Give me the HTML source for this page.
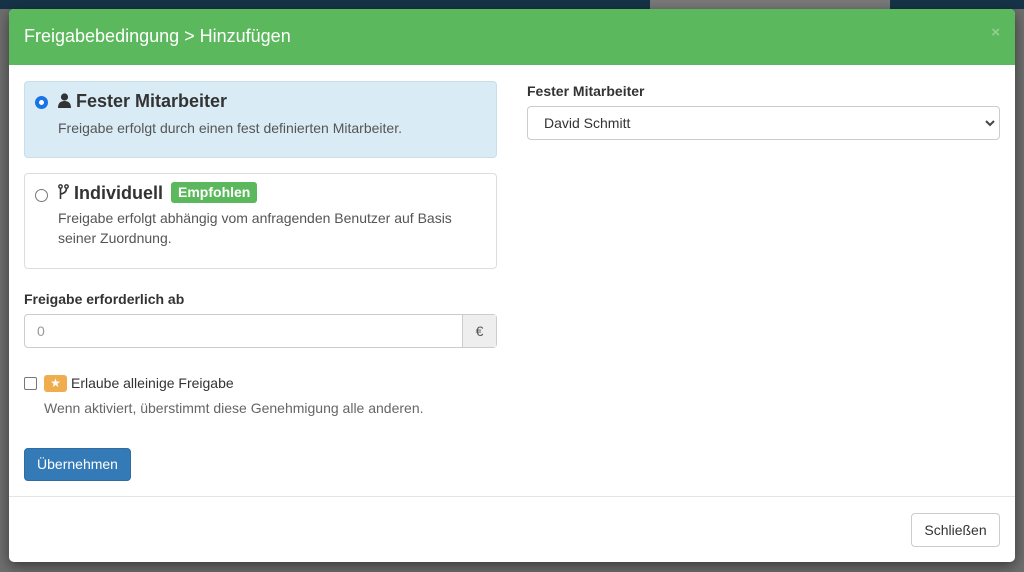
<!DOCTYPE html>
<html><head><meta charset="utf-8"><style>
*{box-sizing:border-box}
body{margin:0;width:1024px;height:572px;overflow:hidden;background:#6f6f6f;font-family:"Liberation Sans",Arial,sans-serif;color:#333;position:relative}
.topbar{position:absolute;left:0;top:0;width:1024px;height:9px;background:#163447}
.search{position:absolute;left:650px;top:0;width:240px;height:9px;background:#7a7a7a}
.modal{position:absolute;left:9px;top:9px;width:1006px;height:553px;background:#fff;border-radius:5px;overflow:hidden;box-shadow:0 4px 14px rgba(0,0,0,.5)}
.hdr{height:56px;background:#5cb85c;color:#fff;font-size:18px;padding:17px 0 0 15px}
.x{position:absolute;right:15px;top:15px;color:#8fd08f;font-weight:bold;font-size:15px}
.opt{position:absolute;left:15px;width:473px;border:1px solid #ddd;border-radius:4px}
.opt1{top:72px;height:77px;background:#d9ecf5;border-color:#c6dfea}
.opt2{top:164px;height:96px}
.radio{position:absolute;left:10px;width:13px;height:13px;border-radius:50%;border:1px solid #777;background:#fff}
.title{position:absolute;left:33px;font-size:18px;font-weight:bold;color:#333}
.desc{position:absolute;left:33px;font-size:14px;color:#555;line-height:20px;width:420px}
.badge{display:inline-block;background:#5cb85c;color:#fff;font-size:14px;padding:2px 7px 3px;border-radius:3px;vertical-align:2px;margin-left:3px}
.lbl{position:absolute;font-size:14px;font-weight:bold;color:#333}
.inp{position:absolute;left:15px;top:305px;width:473px;height:34px;border:1px solid #ccc;border-radius:4px;font-size:14px;color:#999;padding:8px 12px}
.addon{position:absolute;right:0;top:0;width:34px;height:32px;background:#eee;border-left:1px solid #ccc;color:#555;text-align:center;line-height:32px}
.sel{position:absolute;left:518px;top:97px;width:473px;height:34px;border:1px solid #ccc;border-radius:4px;font-size:14px;color:#333;padding:8px 16px}
.btn{position:absolute;font-size:14px;border-radius:4px;text-align:center}
</style></head><body>
<div class="topbar"></div><div class="search"></div>
<div class="modal">
<div class="hdr">Freigabebedingung &gt; Hinzufügen</div><div class="x">×</div>
<div class="opt opt1">
 <div class="radio" style="top:14px;border:4px solid #1a73e8"></div>
 <div class="title" style="top:9px"><svg width="13" height="15" viewBox="0 0 13 15" style="vertical-align:-1px"><circle cx="6.5" cy="4" r="3.6" fill="#333"/><path d="M0 15 Q0 8 6.5 8 Q13 8 13 15Z" fill="#333"/></svg> Fester Mitarbeiter</div>
 <div class="desc" style="top:36px">Freigabe erfolgt durch einen fest definierten Mitarbeiter.</div>
</div>
<div class="opt opt2">
 <div class="radio" style="top:15px"></div>
 <div class="title" style="top:8px"><svg width="11" height="16" viewBox="0 0 11 16" style="vertical-align:-1px"><circle cx="2.5" cy="2.5" r="1.7" fill="none" stroke="#333" stroke-width="1.4"/><circle cx="8.5" cy="2.5" r="1.7" fill="none" stroke="#333" stroke-width="1.4"/><path d="M2.5 4.2V15M8.5 4.2Q8.5 9 2.5 10" fill="none" stroke="#333" stroke-width="1.6"/></svg> Individuell <span class="badge">Empfohlen</span></div>
 <div class="desc" style="top:34px">Freigabe erfolgt abhängig vom anfragenden Benutzer auf Basis seiner Zuordnung.</div>
</div>
<div class="lbl" style="left:15px;top:282px">Freigabe erforderlich ab</div>
<div class="inp">0<div class="addon">€</div></div>
<div style="position:absolute;left:15px;top:368px;width:13px;height:13px;border:1px solid #777;border-radius:2px"></div>
<div style="position:absolute;left:35px;top:366px;width:23px;height:17px;background:#f0ad4e;border-radius:3px;color:#fff;font-size:12px;text-align:center;line-height:17px">★</div>
<div style="position:absolute;left:62px;top:366px;font-size:14px;color:#333">Erlaube alleinige Freigabe</div>
<div style="position:absolute;left:35px;top:391px;font-size:14px;color:#666">Wenn aktiviert, überstimmt diese Genehmigung alle anderen.</div>
<div class="btn" style="left:15px;top:439px;width:107px;height:33px;background:#337ab7;border:1px solid #2e6da4;color:#fff;line-height:31px">Übernehmen</div>
<div style="position:absolute;left:0;top:487px;width:1006px;height:1px;background:#e5e5e5"></div>
<div class="lbl" style="left:518px;top:74px">Fester Mitarbeiter</div>
<div class="sel">David Schmitt<svg width="10" height="7" viewBox="0 0 10 7" style="position:absolute;right:4px;top:13px"><path d="M1 1L5 5L9 1" fill="none" stroke="#444" stroke-width="2"/></svg></div>
<div class="btn" style="left:902px;top:504px;width:89px;height:34px;border:1px solid #ccc;color:#333;line-height:32px;background:#fff">Schließen</div>
</div>
</body></html>
